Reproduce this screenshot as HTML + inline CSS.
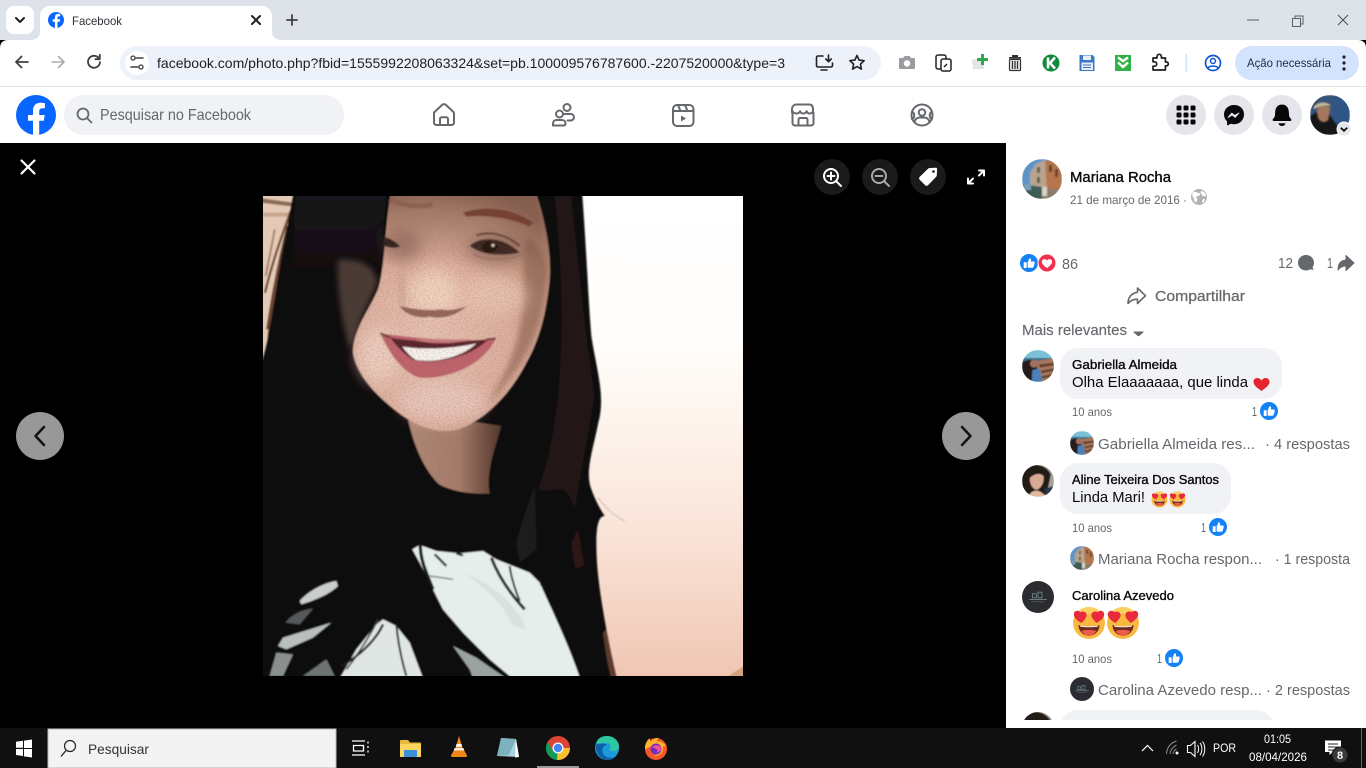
<!DOCTYPE html>
<html lang="pt-BR">
<head>
<meta charset="utf-8">
<title>Facebook</title>
<style>
html,body{margin:0;padding:0;width:1366px;height:768px;overflow:hidden;background:#000}
svg{display:block;font-family:"Liberation Sans",sans-serif}
text{white-space:pre}
.g{fill:#65686c}
.d{fill:#080809}
.sb{stroke-width:.35;stroke:#080809;fill:#080809}
.st{fill:none;stroke:#65686c;stroke-width:2;stroke-linejoin:round;stroke-linecap:round}
.tb{fill:none;stroke:#3c4043;stroke-width:1.8;stroke-linecap:round;stroke-linejoin:round}
</style>
</head>
<body>
<svg width="1366" height="768" viewBox="0 0 1366 768" xmlns="http://www.w3.org/2000/svg">
<defs>
  <linearGradient id="wall" x1="0" y1="0" x2="0" y2="1">
    <stop offset="0" stop-color="#ffffff"/><stop offset=".3" stop-color="#fffdfb"/>
    <stop offset=".5" stop-color="#fdf2ea"/><stop offset=".72" stop-color="#f9e2d6"/>
    <stop offset="1" stop-color="#f0c6b3"/>
  </linearGradient>
  <radialGradient id="skin" gradientUnits="userSpaceOnUse" cx="490" cy="440" r="500">
    <stop offset="0" stop-color="#e9c4b4"/><stop offset=".5" stop-color="#deb09f"/>
    <stop offset=".8" stop-color="#c2967f"/><stop offset="1" stop-color="#8f6656"/>
  </radialGradient>
  <linearGradient id="fore" x1="0" y1="0" x2="0" y2="1">
    <stop offset="0" stop-color="#7a5546" stop-opacity=".6"/><stop offset="1" stop-color="#7a5546" stop-opacity="0"/>
  </linearGradient>
  <linearGradient id="neck" x1="0" y1="0" x2="1" y2="0">
    <stop offset="0" stop-color="#b08a78"/><stop offset=".55" stop-color="#a67c6a"/><stop offset="1" stop-color="#4e3329"/>
  </linearGradient>
  <linearGradient id="hairtop" x1="0" y1="0" x2="0" y2="1">
    <stop offset="0" stop-color="#24242e" stop-opacity=".5"/><stop offset="1" stop-color="#24242e" stop-opacity="0"/>
  </linearGradient>
  <filter id="b5" x="-10%" y="-10%" width="120%" height="120%"><feGaussianBlur stdDeviation="2.500"/></filter>
  <filter id="b16" x="-50%" y="-50%" width="200%" height="200%"><feGaussianBlur stdDeviation="22"/></filter>
  <filter id="b8" x="-50%" y="-50%" width="200%" height="200%"><feGaussianBlur stdDeviation="9"/></filter>
  <filter id="grain" x="0" y="0" width="100%" height="100%">
    <feTurbulence type="fractalNoise" baseFrequency=".22" numOctaves="2" seed="4"/>
    <feColorMatrix values="0 0 0 0 .25  0 0 0 0 .12  0 0 0 0 .1  0 0 0 2.400 -1"/>
  </filter>
  <filter id="bs" x="-10%" y="-10%" width="120%" height="120%"><feGaussianBlur stdDeviation=".7"/></filter>
  <clipPath id="ph"><rect width="1440" height="1440"/></clipPath>
  <clipPath id="faceclip"><path d="M385-20H815C850 80 865 170 860 250C850 350 830 430 790 500C750 580 680 660 600 695C540 720 470 695 420 660C350 610 280 540 270 470C270 400 320 340 345 280C365 220 365 100 385-20z M435 670L650 680 715 690C695 760 668 830 680 892C620 897 560 882 530 866C490 830 455 760 435 670z"/></clipPath>
  <clipPath id="c40"><circle cx="20" cy="20" r="20"/></clipPath>
  <clipPath id="panel"><rect x="1006" y="143" width="360" height="577"/></clipPath>

  <symbol id="like" viewBox="0 0 20 20">
    <circle cx="10" cy="10" r="10" fill="#1482f5"/>
    <path d="M4.6 9.2h2.3c.3 0 .5.2.5.5v5.3c0 .3-.2.5-.5.5H4.6c-.3 0-.5-.2-.5-.5V9.700c0-.3.2-.5.5-.5zM8.500 9.300l2-4.600c1.300 0 2 .9 1.800 2l-.3 1.700h3.200c.9 0 1.400.8 1.200 1.500l-1.200 4.300c-.2.7-.7 1.100-1.300 1.100H9.700c-.7 0-1.200-.5-1.200-1.200z" fill="#fff"/>
  </symbol>
  <symbol id="heart" viewBox="0 0 20 20">
    <circle cx="10" cy="10" r="10" fill="#f0304e"/>
    <path d="M10 16c-4-2.800-6-5-6-7.400C4 6.700 5.400 5.400 7 5.400c1.300 0 2.400.7 3 1.800.6-1.100 1.700-1.800 3-1.800 1.600 0 3 1.300 3 3.200 0 2.400-2 4.600-6 7.400z" fill="#fff"/>
  </symbol>
  <symbol id="eyes" viewBox="0 0 32 32">
    <circle cx="16" cy="16" r="15" fill="#f9b93f"/>
    <path d="M1.800 11C4 4.500 9.500 1 16 1s12 3.500 14.200 10C26 6 6 6 1.800 11z" fill="#fbd063"/>
    <path d="M6 18c6.500 1.500 13.500 1.500 20 0-.5 6.500-5 10-10 10S6.500 24.500 6 18z" fill="#6e2b1e"/>
    <path d="M9 23.500c4-1.400 10-1.400 14 0-2 3-4.500 4.500-7 4.500s-5-1.500-7-4.500z" fill="#ee5a4a"/>
    <path d="M7.500 18.400c5.500 1 11.500 1 17 0l-.3 1c-5 .8-11.400.8-16.400 0z" fill="#fff"/>
    <path d="M8.700 16C5 13.600 1.400 11 1.700 7.400 2 4.500 5.500 3.300 7.800 5.800c2.800-1.500 6.200-.2 5.900 3.100-.2 2.500-2.600 4.800-5 7.100zM23.300 16c3.700-2.400 7.300-5 7-8.600C30 4.500 26.500 3.300 24.200 5.800c-2.800-1.500-6.200-.2-5.900 3.100.2 2.500 2.600 4.800 5 7.100z" fill="#e9293c"/>
  </symbol>
  <symbol id="avM" viewBox="0 0 40 40">
    <g clip-path="url(#c40)"><g filter="url(#bs)">
      <rect width="40" height="40" fill="#5f94c9"/>
      <path d="M22 2L40 0V30L24 36z" fill="#b5744e"/>
      <path d="M8 14l6-9 9-4 2 32L8 30z" fill="#b8a48e"/>
      <rect x="27" y="6" width="3" height="7" fill="#5c4334"/>
      <rect x="33" y="10" width="3" height="8" fill="#6b4732"/>
      <rect x="15" y="8" width="3" height="6" fill="#6a5a4c"/>
      <rect x="15" y="18" width="3" height="6" fill="#6a5a4c"/>
      <path d="M0 25l20 3v12H0z" fill="#3f5b56"/>
      <rect x="2" y="25" width="7" height="6" fill="#7ca0b8"/>
      <path d="M20 30h14v10H20z" fill="#8b7b6a"/>
      <rect x="20" y="28" width="5" height="9" fill="#d8d2c8"/>
    </g></g>
  </symbol>
  <symbol id="avG" viewBox="0 0 40 40">
    <g clip-path="url(#c40)"><g filter="url(#bs)">
      <rect width="40" height="40" fill="#3d6f88"/>
      <rect y="0" width="40" height="10" fill="#7cc0d8"/>
      <path d="M18 14L40 10V40H22z" fill="#a87558"/>
      <path d="M22 18l18-2v3l-18 3zM24 26l16-3v3l-16 3zM24 33l14-3v3l-14 3z" fill="#5f4236"/>
      <path d="M0 16c8-6 16-4 18 2l2 22H0z" fill="#271c1c"/>
      <path d="M13 25l9-2 4 17H12z" fill="#4e7fb8"/>
      <circle cx="15" cy="17" r="5" fill="#a36f5e"/>
    </g></g>
  </symbol>
  <symbol id="avA" viewBox="0 0 40 40">
    <g clip-path="url(#c40)"><g filter="url(#bs)">
      <rect width="40" height="40" fill="#a89f98"/>
      <path d="M0 6C10-4 30-2 36 12L30 40H0z" fill="#241a18"/>
      <path d="M10 16c6-6 14-6 17-2 1 8-3 15-9 17-5-1-9-8-8-15z" fill="#d9ab94"/>
      <path d="M8 40c2-6 6-8 10-8s6 2 14 8z" fill="#e0b8a2"/>
      <path d="M28 30l12-4v14H30z" fill="#27384a"/>
    </g></g>
  </symbol>
  <symbol id="avC" viewBox="0 0 40 40">
    <circle cx="20" cy="20" r="20" fill="#2b2c31"/>
    <path d="M13 21v-5h5v5zM20 21v-7h5v7z" fill="none" stroke="#6f8c8c" stroke-width="1"/>
    <path d="M9 23h22" stroke="#7d9a9a" stroke-width="1"/>
    <path d="M12 26h16" stroke="#555a5e" stroke-width="1"/>
  </symbol>
</defs>

<!-- Browser chrome -->
<rect width="1366" height="40" fill="#dee3ea"/>
<rect x="6" y="6" width="28" height="28" rx="8" fill="#fff" opacity=".95"/>
<path d="M16 18l4 4 4-4" fill="none" stroke="#1f1f1f" stroke-width="2" stroke-linecap="round" stroke-linejoin="round"/>
<path d="M30 40c6 0 10-3 10-9V16c0-5.500 4.500-10 10-10h212c5.500 0 10 4.500 10 10v15c0 6 4 9 10 9z" fill="#fff"/>
<circle cx="56" cy="20" r="8" fill="#0866ff"/>
<path d="M57.500 28v-6.300h2.200l.4-2.500h-2.600v-1.500c0-.8.300-1.300 1.400-1.300h1.300v-2.300s-1-.2-2-.2c-2.100 0-3.300 1.300-3.300 3.500v1.800h-2.200v2.500h2.200V28z" fill="#fff"/>
<text x="72" y="25" font-size="12" fill="#2d3135" textLength="50" lengthAdjust="spacingAndGlyphs">Facebook</text>
<path d="M252 16l8 8M260 16l-8 8" stroke="#1f1f1f" stroke-width="2" stroke-linecap="round"/>
<path d="M292 15v10M287 20h10" stroke="#3c4043" stroke-width="1.800" stroke-linecap="round"/>
<path d="M1247 20h12" stroke="#5a5f66" stroke-width="1"/>
<path d="M1292.500 18.500h8v8h-8zM1295 18.500v-2.500h8v8h-2.500" fill="none" stroke="#5a5f66" stroke-width="1"/>
<path d="M1338 15l10 10M1348 15l-10 10" stroke="#4a4f55" stroke-width="1"/>

<path d="M0 86V48c0-5 3-8 8-8h1350c5 0 8 3 8 8v38z" fill="#fff"/>
<rect y="86" width="1366" height="1" fill="#e1e3e6"/>
<path d="M28 62H16M21.500 56.500L16 62l5.500 5.500" class="tb"/>
<path d="M52 62h12M58.500 56.500L64 62l-5.500 5.500" fill="none" stroke="#a8acb0" stroke-width="1.600" stroke-linecap="round" stroke-linejoin="round"/>
<path d="M99.200 58.800a6 6 0 1 0 .8 3.200M99.800 54.800v4.400h-4.400" class="tb"/>
<rect x="120" y="46" width="761" height="34" rx="17" fill="#edf2fa"/>
<circle cx="137" cy="63" r="12" fill="#fff"/>
<path d="M136 58h7M131 67h7" stroke="#3c4043" stroke-width="1.500" stroke-linecap="round"/>
<circle cx="133" cy="58" r="2" fill="none" stroke="#3c4043" stroke-width="1.300"/>
<circle cx="141" cy="67" r="2" fill="none" stroke="#3c4043" stroke-width="1.300"/>
<text x="157" y="68" font-size="14" fill="#1f1f1f" textLength="628" lengthAdjust="spacingAndGlyphs">facebook.com/photo.php?fbid=1555992208063324&amp;set=pb.100009576787600.-2207520000&amp;type=3</text>
<path d="M823 56h-5a1.500 1.500 0 0 0-1.500 1.500v8a1.500 1.500 0 0 0 1.500 1.500h13a1.500 1.500 0 0 0 1.500-1.500V63M821 70h6M828.500 55v6.500M825.800 59l2.700 2.700 2.700-2.700" fill="none" stroke="#1f1f1f" stroke-width="1.600" stroke-linecap="round" stroke-linejoin="round"/>
<path d="M857 55.500l2.100 4.600 5 .6-3.700 3.400 1 5-4.400-2.500-4.400 2.500 1-5-3.700-3.400 5-.6z" fill="none" stroke="#1f1f1f" stroke-width="1.600" stroke-linejoin="round"/>

<!-- extensions -->
<path d="M900 58h3l1.500-2h5l1.500 2h3c.6 0 1 .4 1 1v9c0 .6-.4 1-1 1h-14c-.6 0-1-.4-1-1v-9c0-.6.4-1 1-1z" fill="#9a9ca0"/>
<circle cx="907" cy="63.500" r="3.200" fill="#fff"/>
<rect x="936" y="55" width="10" height="14" rx="2" fill="#fff" stroke="#222" stroke-width="1.500"/>
<rect x="941" y="59" width="10" height="12" rx="2" fill="#fff" stroke="#222" stroke-width="1.500"/>
<path d="M944 67l3-3" stroke="#222" stroke-width="1.500"/>
<path d="M972 59l12 1v9h-11z" fill="#e4e6e6"/>
<path d="M981 54h3v4h4v3h-4v4h-3v-4h-4v-3h4z" fill="#2ea84a"/>
<path d="M1009 57h12v1.800h-12zM1012 55h6v2h-6z" fill="#333"/>
<rect x="1009.500" y="59.500" width="11" height="11" rx="1" fill="#f0f0f0" stroke="#333" stroke-width="1.200"/>
<path d="M1012.500 61v8M1015 61v8M1017.500 61v8" stroke="#333" stroke-width="1.300"/>
<circle cx="1051" cy="63" r="8.500" fill="#0f8a3c"/>
<path d="M1048 57.500v11M1055 57.500l-5 5.500 5 5.500" fill="none" stroke="#fff" stroke-width="2.600"/>
<path d="M1079.500 55h13l2 2v14h-15z" fill="#3b78c9"/>
<rect x="1083" y="55.500" width="8" height="4.500" fill="#e8eef6"/>
<rect x="1081.500" y="62.500" width="11.500" height="7.500" fill="#e8eef6"/>
<path d="M1083 65h8M1083 67.500h8" stroke="#3b78c9" stroke-width=".9"/>
<rect x="1115" y="55" width="16" height="16" fill="#2fb344"/>
<path d="M1118 57.500l5 3.500 5-3.500M1118 62.500l5 4.500 5-4.500" fill="none" stroke="#fff" stroke-width="2.400"/>
<path d="M1153 58h4v-1.500a2.200 2.200 0 0 1 4.400 0V58h4v4h1.500a2 2 0 0 1 0 3.800H1165.400V70h-12.400v-3.800h1.500a2.200 2.200 0 0 0 0-4.400H1153z" fill="none" stroke="#1f1f1f" stroke-width="1.700" stroke-linejoin="round"/>
<rect x="1185.500" y="54" width="1.500" height="18" fill="#d3e0ed"/>
<circle cx="1213" cy="63" r="7.500" fill="none" stroke="#0b57d0" stroke-width="1.700"/>
<circle cx="1213" cy="61" r="2.500" fill="none" stroke="#0b57d0" stroke-width="1.500"/>
<path d="M1208 68c1-2.500 9-2.500 10 0" fill="none" stroke="#0b57d0" stroke-width="1.500"/>
<rect x="1235" y="46" width="124" height="34" rx="17" fill="#d3e3fd"/>
<text x="1247" y="67" font-size="12" fill="#1f2b40" textLength="84" lengthAdjust="spacingAndGlyphs">Ação necessária</text>
<circle cx="1344" cy="57" r="1.600" fill="#1f1f1f"/><circle cx="1344" cy="63" r="1.600" fill="#1f1f1f"/><circle cx="1344" cy="69" r="1.600" fill="#1f1f1f"/>

<!-- Facebook nav -->
<rect y="87" width="1366" height="56" fill="#fff"/>
<circle cx="36" cy="115" r="20" fill="#0866ff"/>
<path d="M27.800 25.800l.9-5.800h-5.500v-3.700c0-1.600.8-3.100 3.200-3.100h2.500V8.200s-2.300-.4-4.400-.4c-4.500 0-7.500 2.700-7.500 7.700V20h-5v5.800h5v13.900a20 20 0 0 0 6.200 0V25.800z" fill="#fff" transform="translate(16 95)"/>
<rect x="64" y="95" width="280" height="40" rx="20" fill="#f0f2f5"/>
<circle cx="83" cy="114" r="5.500" fill="none" stroke="#65686c" stroke-width="1.800"/>
<path d="M87 118l4.500 4.500" stroke="#65686c" stroke-width="1.800" stroke-linecap="round"/>
<text x="100" y="120" font-size="16" class="g" textLength="151" lengthAdjust="spacingAndGlyphs">Pesquisar no Facebook</text>

<path d="M434 112.500l8-7.500c1.200-1.100 2.800-1.100 4 0l7 6.500c.6.600 1 1.400 1 2.300v8.700c0 1.400-1.100 2.500-2.500 2.500h-15c-1.400 0-2.500-1.100-2.500-2.500v-8.200c0-.9 0-1.600 0-1.800z M440 125v-6c0-1 .8-1.800 1.800-1.800h4.400c1 0 1.800.8 1.800 1.800v6" class="st"/>
<g transform="translate(1.500 0)">
<circle cx="565.500" cy="107.500" r="3.500" class="st"/>
<circle cx="558" cy="114" r="3.500" class="st"/>
<path d="M551.500 125.500v-2c0-2 1.500-3.500 3.500-3.500h5.500c2 0 3.500 1.500 3.500 3.500v.5c0 .8-.7 1.500-1.500 1.500zM563 114h6c2 0 3.500 1.400 3.500 3.200s-1.500 3.300-3.500 3.300h-3" class="st"/>
</g>
<g transform="translate(3 0)">
<rect x="670" y="105" width="20.500" height="21" rx="4" class="st"/>
<path d="M670 111h20.500M675 105l2.500 6M682 105l2.500 6" class="st"/>
<path d="M678 115.500l5 3-5 3z" fill="#65686c"/>
</g>
<path d="M790 113v-3c0-3 1.800-5 4.500-5h12.800c2.700 0 3.700 2 3.700 5v.7c0 2-1.500 3.300-3.200 3.300-1.500 0-2.800-1-3.200-2.300-.5 1.300-1.800 2.300-3.300 2.300s-2.800-1-3.300-2.300c-.5 1.300-1.800 2.300-3.300 2.300-2 0-3.700-.8-4.700-3zM790.500 113v10.500c0 1.400 1.100 2.500 2.500 2.500h16c1.400 0 2.500-1.100 2.500-2.500V113M796.500 126v-6c0-1 .8-1.500 1.500-1.500h6c.7 0 1.500.5 1.500 1.500v6" class="st" transform="translate(2 -.5)"/>
<circle cx="922" cy="115" r="10.500" class="st"/>
<circle cx="922" cy="112.500" r="3.300" class="st"/>
<path d="M914.500 122c.5-3 3-4.500 5-4.500h5c2 0 4.500 1.500 5 4.500M912 112c3 1 3 6 0 7M932 112c-3 1-3 6 0 7" class="st"/>

<circle cx="1186" cy="115" r="20" fill="#e4e6eb"/>
<g fill="#080809">
  <rect x="1176.500" y="105.500" width="5" height="5" rx="1.200"/><rect x="1183.500" y="105.500" width="5" height="5" rx="1.200"/><rect x="1190.500" y="105.500" width="5" height="5" rx="1.200"/>
  <rect x="1176.500" y="112.500" width="5" height="5" rx="1.200"/><rect x="1183.500" y="112.500" width="5" height="5" rx="1.200"/><rect x="1190.500" y="112.500" width="5" height="5" rx="1.200"/>
  <rect x="1176.500" y="119.500" width="5" height="5" rx="1.200"/><rect x="1183.500" y="119.500" width="5" height="5" rx="1.200"/><rect x="1190.500" y="119.500" width="5" height="5" rx="1.200"/>
</g>
<circle cx="1234" cy="115" r="20" fill="#e4e6eb"/>
<path d="M1234 105c-5.800 0-10 4.100-10 9.400 0 2.800 1.100 5.200 3 6.900v3.300c0 .5.500.8.900.6l3-1.400c1 .3 2 .4 3.100.4 5.800 0 10-4.100 10-9.800S1239.800 105 1234 105z" fill="#080809"/>
<path d="M1228 117.500l3.800-4.500 3 2.400 4.200-2.400-3.800 4.500-3-2.400z" fill="#e4e6eb" stroke="#e4e6eb" stroke-width=".8" stroke-linejoin="round"/>
<circle cx="1282" cy="115" r="20" fill="#e4e6eb"/>
<path d="M1282 104.500c-4 0-6.500 3-6.800 7l-.3 4c-.1 1.500-1 2.500-2 3.500-.7.800-.2 2 .9 2h16.400c1.100 0 1.600-1.200.9-2-1-1-1.900-2-2-3.500l-.3-4c-.3-4-2.800-7-6.800-7zM1278.500 123.300a3.600 3.600 0 0 0 7 0z" fill="#080809"/>
<g transform="translate(1310 95)">
  <g clip-path="url(#c40)"><g filter="url(#bs)">
    <rect width="40" height="40" fill="#34557c"/>
    <rect x="24" width="16" height="40" fill="#2d5585"/>
    <path d="M0 40V22c4-6 12-6 20-2l14 20z" fill="#141216"/>
    <path d="M7 14c3-3 10-4 13-1l-2 12c-4 3-8 2-10-3z" fill="#a5775c"/>
    <path d="M4 12c3-5 13-6 17-1-5-1-12 0-17 3z" fill="#c9b898"/>
    <path d="M0 0h14L8 6 0 14z" fill="#3f4650"/>
  </g></g>
</g>
<circle cx="1344" cy="129" r="7" fill="#e4e6eb" stroke="#fff" stroke-width="1"/>
<path d="M1340.800 127.800l3.200 3 3.200-3" fill="none" stroke="#080809" stroke-width="1.700"/>

<!-- Photo viewer -->
<rect y="143" width="1006" height="585" fill="#000"/>
<path d="M21.500 160.500l13 13M34.500 160.500l-13 13" stroke="#fff" stroke-width="2.200" stroke-linecap="round"/>
<circle cx="832" cy="177" r="18" fill="#1a1a1a"/>
<circle cx="880" cy="177" r="18" fill="#1a1a1a"/>
<circle cx="928" cy="177" r="18" fill="#1a1a1a"/>
<circle cx="831" cy="176" r="7" fill="none" stroke="#fff" stroke-width="2"/>
<path d="M836 181l5 5M827.500 176h7M831 172.500v7" stroke="#fff" stroke-width="2" stroke-linecap="round"/>
<circle cx="879" cy="176" r="7" fill="none" stroke="#a8a8a8" stroke-width="2"/>
<path d="M884 181l5 5M875.500 176h7" stroke="#a8a8a8" stroke-width="2" stroke-linecap="round"/>
<path d="M929.500 168l6.300-.3c.8 0 1.300.5 1.300 1.300l-.3 6.300c0 .7-.3 1.200-.8 1.700l-8 8.200c-.8.800-2 .8-2.800 0l-5.500-5.500c-.8-.8-.8-2 0-2.800l8.200-8c.5-.5 1-.8 1.600-.9z" fill="#fff"/>
<circle cx="933.500" cy="171.500" r="1.300" fill="#1a1a1a"/>
<path d="M979 170.500h5v5M984 170.500l-5 5M973 183.500h-5v-5M968 183.500l5-5" fill="none" stroke="#fff" stroke-width="2" stroke-linecap="round" stroke-linejoin="round"/>
<circle cx="40" cy="436" r="24" fill="#989898"/>
<path d="M44 427l-8.500 9 8.500 9" fill="none" stroke="#111" stroke-width="2.500" stroke-linecap="round" stroke-linejoin="round"/>
<circle cx="966" cy="436" r="24" fill="#989898"/>
<path d="M962 427l8.500 9-8.500 9" fill="none" stroke="#111" stroke-width="2.500" stroke-linecap="round" stroke-linejoin="round"/>

<g transform="translate(263 196) scale(.33334)" clip-path="url(#ph)">
  <rect width="1440" height="1440" fill="url(#wall)"/>
  <path d="M1395 1440l45-28v28z" fill="#d5a382"/>
  <g filter="url(#b5)">
    <!-- top-left wall with strands -->
    <path d="M-40-40h150L60 200 10 570H-40z" fill="#e4cab6"/>
    <path d="M-40 2L90 20v12L-40 16z" fill="#8e6a55"/>
    <path d="M0 50H80V62H0z" fill="#c7a48d"/>
    <path d="M85 40C60 110 30 190 6 290" stroke="#6d4430" stroke-width="7" fill="none"/>
    <path d="M75 90C50 190 30 290 14 400" stroke="#5c3a2a" stroke-width="9" fill="none"/>
    <path d="M50 200C30 300 15 400 10 540" stroke="#6d4430" stroke-width="8" fill="none"/>
    <path d="M35 100C25 160 15 200 8 240" stroke="#a57f68" stroke-width="6" fill="none"/>
    <!-- dark silhouette -->
    <path d="M96-40H955C970 150 975 300 985 420C1000 520 1028 600 1006 680C990 760 965 830 985 880C1000 920 1015 945 1025 960C1008 960 1000 985 1000 1040C1000 1150 1020 1250 1068 1500H-40V560C15 520 30 300 66 130z" fill="#0e090a"/>
    <path d="M1005 905C1030 940 1055 960 1085 975" stroke="#a89488" stroke-width="1.500" fill="none"/>
    <!-- hair colour variations -->
    <path d="M100-40H372L350 240 280 300 80 320z" fill="url(#hairtop)"/>
    <path d="M225 190C260 190 330 190 345 260L300 360 262 460C240 400 220 300 225 190z" fill="#5a4741" opacity=".8" filter="url(#b8)"/>
    <path d="M875 0h50c20 200 40 400 70 600l-60 340c-30-100-60-40-110-60 70-180 90-500 50-880z" fill="#2e1b17" opacity=".6"/>
    <path d="M945 1000c20 120 50 300 110 440h-50C970 1300 940 1150 925 1040z" fill="#3c2119" opacity=".7"/>
    <path d="M760 1040c20-70 40-130 55-170l5 190-50 40z" fill="#4a4344" opacity=".3"/>
    <!-- neck -->
    <path d="M435 670L650 680 715 690C695 760 668 830 680 892C620 897 560 882 530 866C490 830 455 760 435 670z" fill="url(#neck)"/>
    <!-- face -->
    <path d="M385-20H815C850 80 865 170 860 250C850 350 830 430 790 500C750 580 680 660 600 695C540 720 470 695 420 660C350 610 280 540 270 470C270 400 320 340 345 280C365 220 365 100 385-20z" fill="url(#skin)"/>
    <path d="M385-20H815L850 210H360C370 150 375 60 385-20z" fill="url(#fore)"/>
    <path d="M790 120c50 30 70 90 60 140-10 110-40 190-90 260-30 40-50 70-90 110 60-100 110-200 110-330 0-70 0-130 10-180z" fill="#7a5141" opacity=".5" filter="url(#b8)"/>
    <!-- soft modelling -->
    <ellipse cx="345" cy="480" rx="60" ry="80" fill="#f3d6c8" opacity=".75" filter="url(#b16)"/>
    <ellipse cx="515" cy="290" rx="75" ry="65" fill="#f3d5c0" opacity=".95" filter="url(#b16)"/>
    <ellipse cx="690" cy="300" rx="100" ry="60" fill="#eac6b0" opacity=".85" filter="url(#b16)"/>
    <ellipse cx="540" cy="615" rx="130" ry="60" fill="#efd3cb" opacity=".6" filter="url(#b16)"/>
    <ellipse cx="700" cy="160" rx="90" ry="45" fill="#6f4c40" opacity=".45" filter="url(#b16)"/>
    <ellipse cx="420" cy="150" rx="55" ry="50" fill="#6f4c40" opacity=".45" filter="url(#b16)"/>
    <path d="M410 230C420 270 425 300 420 330" stroke="#8e6352" stroke-width="20" fill="none" opacity=".35" filter="url(#b16)"/>
    <!-- brow -->
    <path d="M600 50C660 28 750 35 810 80L800 92C740 65 670 55 610 62z" fill="#74412f"/>
    <path d="M380 10C420 30 470 35 510 25" stroke="#8c6250" stroke-width="14" fill="none"/>
    <!-- eyes -->
    <path d="M620 150C650 120 720 120 770 170C720 180 660 180 620 150z" fill="#3d2720"/>
    <ellipse cx="680" cy="153" rx="24" ry="17" fill="#201211"/>
    <circle cx="690" cy="148" r="5" fill="#d9c2b0"/>
    <path d="M640 118C680 104 730 115 770 150" stroke="#63423a" stroke-width="6" fill="none"/>
    <path d="M630 175C670 195 730 195 780 175" stroke="#a07766" stroke-width="6" fill="none"/>
    <path d="M362 125C375 122 395 135 412 152C395 158 375 155 360 148z" fill="#33221d"/>
    <!-- nose -->
    <path d="M410 330C430 360 470 368 500 362C530 370 580 362 610 330C585 340 560 345 535 340C500 345 450 340 410 330z" fill="#7d4f42" opacity=".8"/>
    <!-- mouth -->
    <path d="M352 412C450 425 590 440 698 428C660 510 550 552 470 545C420 530 380 475 352 412z" fill="#bf646c"/>
    <path d="M382 425C470 440 590 440 675 430C630 480 520 508 450 492C420 472 400 450 382 425z" fill="#58222a"/>
    <path d="M455 432C500 425 560 432 625 430C580 445 500 445 455 432z" fill="#cc7a7c"/>
    <path d="M418 452C480 462 570 458 640 442C600 482 520 502 458 492C440 480 428 466 418 452z" fill="#f8f4f0"/>
    <path d="M352 412L382 425" stroke="#6d3a38" stroke-width="6"/>
    <path d="M670 430L698 428" stroke="#6d3a38" stroke-width="6"/>

    <!-- shirt: main white piece -->
    <path d="M448 1060L470 1047L520 1065L590 1072L660 1065L700 1090L800 1130L830 1160C870 1250 930 1370 968 1500H790L740 1440L680 1390L600 1310L540 1240L510 1180L470 1100z" fill="#e6eeec"/>
    <path d="M600 1130c80 30 160 90 190 170l-40-10c-30-70-90-120-150-160z" fill="#cdd8d6" opacity=".6"/>
    <!-- shirt: lower white piece -->
    <path d="M360 1270L400 1290L440 1340L500 1500H200L280 1360L340 1285z" fill="#dfe6e4"/>
    <path d="M570 1350L640 1385L720 1440L740 1500H650L620 1420z" fill="#9aa2a2"/>
    <!-- left stripes -->
    <path d="M110 1215C130 1190 180 1160 220 1155L225 1170C200 1195 150 1215 115 1225z" fill="#c9cfce"/>
    <path d="M68 1280C85 1255 120 1240 150 1238L110 1285z" fill="#55595a"/>
    <path d="M45 1350L60 1325L205 1280L150 1325L70 1360z" fill="#b9bfbf"/>
    <path d="M20 1440L40 1370L90 1375L60 1440z" fill="#8a9090"/>
    <path d="M120 1440L190 1390L215 1440z" fill="#6e7373"/>
    <!-- wisps -->
    <path d="M472 1040C470 1090 490 1130 510 1180" stroke="#151213" stroke-width="10" fill="none"/>
    <path d="M515 1075L550 1110M580 1072L600 1078" stroke="#2a2a2c" stroke-width="7"/>
    <path d="M500 1140L570 1150" stroke="#8b9594" stroke-width="5"/>
    <path d="M685 1085C700 1125 730 1180 785 1240" stroke="#27282a" stroke-width="9" fill="none"/>
    <path d="M740 1110C745 1150 760 1190 770 1215" stroke="#27282a" stroke-width="6" fill="none"/>
    <path d="M400 1285C405 1340 415 1390 430 1440" stroke="#1d2224" stroke-width="6" fill="none"/>
    <path d="M360 1285C340 1330 290 1380 235 1410" stroke="#1d1a1c" stroke-width="7" fill="none"/>
    <path d="M345 1270C320 1320 290 1370 250 1420" stroke="#3a3a3c" stroke-width="5" fill="none"/>
    <path d="M860 1190C900 1280 960 1380 1000 1500L1068 1500C1020 1300 990 1180 980 1100L830 1165z" fill="#0e090a"/>
    <path d="M1030 1300c10 50 20 100 35 160h-15c-15-40-25-110-30-150z" fill="#5d3a2d"/>
  </g>
  <!-- skin grain -->
  <g clip-path="url(#faceclip)"><rect width="1000" height="900" filter="url(#grain)" opacity=".3"/></g>
</g>

<!-- Right panel -->
<rect x="1006" y="143" width="360" height="585" fill="#fff"/>
<use href="#avM" x="1022" y="159" width="40" height="40"/>
<text x="1070" y="182" font-size="15" class="sb" textLength="101" lengthAdjust="spacingAndGlyphs">Mariana Rocha</text>
<text x="1070" y="204" font-size="12" class="g" textLength="117" lengthAdjust="spacingAndGlyphs">21 de março de 2016 ·</text>
<circle cx="1199" cy="197" r="8" fill="#b0b3b8"/>
<path d="M1193 192c3-1 4 1 6 1s1 3-1 3-2 2-1 3-1 4-2 3-1-4-2-5-1-3 0-5zM1201 191c2 0 5 2 5 5-2 1-3 0-4-1s-2-3-1-4zM1203 199c1 0 2 0 2 1l-2 3-1-1z" fill="#fff"/>
<use href="#like" x="1020" y="254" width="18" height="18"/>
<circle cx="1047" cy="263" r="9.500" fill="#fff"/>
<use href="#heart" x="1038.500" y="254.500" width="17" height="17"/>
<text x="1062" y="269" font-size="15" class="g" textLength="16" lengthAdjust="spacingAndGlyphs">86</text>
<text x="1278" y="268" font-size="15" class="g" textLength="15" lengthAdjust="spacingAndGlyphs">12</text>
<path d="M1306 255c4.500 0 8 3.400 8 7.700 0 1.900-.6 3.400-1.500 4.600l1.200 2.700-3.200-.8c-1.300.8-2.900 1.200-4.500 1.200-4.500 0-8-3.300-8-7.700s3.500-7.700 8-7.700z" fill="#65686c"/>
<text x="1327" y="268" font-size="15" class="g" textLength="6" lengthAdjust="spacingAndGlyphs">1</text>
<path d="M1346 255.500l8 7.500-8 7.500v-4.500c-3.500 0-6 1-8 4 0-5 2-9.500 8-10z" fill="#65686c" stroke="#65686c" stroke-linejoin="round"/>
<path d="M1137.500 288l8 7.700-8 7.800v-4.300c-4 0-7 1-9.500 4.300 0-6 3.500-10.500 9.500-11.200z" fill="none" stroke="#65686c" stroke-width="1.600" stroke-linejoin="round"/>
<text x="1155" y="301" font-size="15" class="g" stroke="#65686c" stroke-width=".25" textLength="90" lengthAdjust="spacingAndGlyphs">Compartilhar</text>
<text x="1022" y="335" font-size="15" class="g" stroke="#65686c" stroke-width=".15" textLength="105" lengthAdjust="spacingAndGlyphs">Mais relevantes</text>
<path d="M1134 331.500h9c.5 0 .7.600.4.900l-4 3.500c-.5.400-1.300.400-1.800 0l-4-3.500c-.3-.3-.1-.9.400-.9z" fill="#65686c"/>

<g clip-path="url(#panel)">
  <!-- Comment 1 -->
  <use href="#avG" x="1022" y="350" width="32" height="32"/>
  <rect x="1060" y="348" width="222" height="51" rx="18" fill="#f0f2f5"/>
  <text x="1072" y="369" font-size="13" class="sb" stroke-width=".25" textLength="105" lengthAdjust="spacingAndGlyphs">Gabriella Almeida</text>
  <text x="1072" y="387" font-size="15" class="d" textLength="176" lengthAdjust="spacingAndGlyphs">Olha Elaaaaaaa, que linda</text>
  <path d="M1261.500 391c-5-3.500-8-6-8-9.200 0-2.200 1.700-3.800 3.700-3.800 1.800 0 3.400 1 4.300 2.600.9-1.600 2.500-2.600 4.300-2.600 2 0 3.700 1.600 3.700 3.800 0 3.200-3 5.700-8 9.200z" fill="#e2252f"/>
  <text x="1072" y="416" font-size="12" class="g" textLength="40" lengthAdjust="spacingAndGlyphs">10 anos</text>
  <text x="1252" y="416" font-size="13" class="g" textLength="5" lengthAdjust="spacingAndGlyphs">1</text>
  <use href="#like" x="1260" y="402" width="18" height="18"/>
  <use href="#avG" x="1070" y="431" width="24" height="24"/>
  <text x="1098" y="449" font-size="15" class="g" textLength="157" lengthAdjust="spacingAndGlyphs">Gabriella Almeida res...</text>
  <text x="1265" y="449" font-size="15" class="g" textLength="85" lengthAdjust="spacingAndGlyphs">· 4 respostas</text>

  <!-- Comment 2 -->
  <use href="#avA" x="1022" y="465" width="32" height="32"/>
  <rect x="1060" y="463" width="171" height="51" rx="18" fill="#f0f2f5"/>
  <text x="1072" y="484" font-size="13" class="sb" stroke-width=".25" textLength="147" lengthAdjust="spacingAndGlyphs">Aline Teixeira Dos Santos</text>
  <text x="1072" y="502" font-size="15" class="d" textLength="73" lengthAdjust="spacingAndGlyphs">Linda Mari!</text>
  <use href="#eyes" x="1151" y="491" width="17" height="17"/>
  <use href="#eyes" x="1169" y="491" width="17" height="17"/>
  <text x="1072" y="532" font-size="12" class="g" textLength="40" lengthAdjust="spacingAndGlyphs">10 anos</text>
  <text x="1201" y="532" font-size="13" class="g" textLength="5" lengthAdjust="spacingAndGlyphs">1</text>
  <use href="#like" x="1209" y="518" width="18" height="18"/>
  <use href="#avM" x="1070" y="546" width="24" height="24"/>
  <text x="1098" y="564" font-size="15" class="g" textLength="164" lengthAdjust="spacingAndGlyphs">Mariana Rocha respon...</text>
  <text x="1275" y="564" font-size="15" class="g" textLength="75" lengthAdjust="spacingAndGlyphs">· 1 resposta</text>

  <!-- Comment 3 -->
  <use href="#avC" x="1022" y="581" width="32" height="32"/>
  <text x="1072" y="600" font-size="13" class="sb" stroke-width=".25" textLength="102" lengthAdjust="spacingAndGlyphs">Carolina Azevedo</text>
  <use href="#eyes" x="1072" y="606" width="34" height="34"/>
  <use href="#eyes" x="1106" y="606" width="34" height="34"/>
  <text x="1072" y="663" font-size="12" class="g" textLength="40" lengthAdjust="spacingAndGlyphs">10 anos</text>
  <text x="1157" y="663" font-size="13" class="g" textLength="5" lengthAdjust="spacingAndGlyphs">1</text>
  <use href="#like" x="1165" y="649" width="18" height="18"/>
  <use href="#avC" x="1070" y="677" width="24" height="24"/>
  <text x="1098" y="695" font-size="15" class="g" textLength="164" lengthAdjust="spacingAndGlyphs">Carolina Azevedo resp...</text>
  <text x="1266" y="695" font-size="15" class="g" textLength="84" lengthAdjust="spacingAndGlyphs">· 2 respostas</text>

  <!-- Comment 4 (cut off) -->
  <use href="#avA" x="1022" y="712" width="32" height="32"/>
  <rect x="1060" y="710" width="214" height="51" rx="18" fill="#f0f2f5"/>
</g>

<!-- Taskbar -->
<rect y="728" width="1366" height="40" fill="#101010"/>
<path d="M16 741.800l7-1v7h-7zM24 740.600l8-1.100v8.500h-8zM16 749h7v7l-7-1zM24 749h8v8.500l-8-1.100z" fill="#fff"/>
<rect x="48" y="729" width="288" height="39" fill="#f3f3f3" stroke="#b9b9b9" stroke-width="1"/>
<circle cx="70" cy="746" r="5.500" fill="none" stroke="#222" stroke-width="1.200"/>
<path d="M66 750.500l-5 6" stroke="#222" stroke-width="1.300"/>
<text x="88" y="754" font-size="14" fill="#333" textLength="61" lengthAdjust="spacingAndGlyphs">Pesquisar</text>
<path d="M352 741h13M352 755h13M353.500 745.500h10v5.500h-10z" fill="none" stroke="#fff" stroke-width="1.300"/>
<path d="M368 741.500v2M368 746v2M368 750.500v2" stroke="#fff" stroke-width="1.300"/>
<path d="M400 741c0-.6.400-1 1-1h7l2 2.500h10c.6 0 1 .4 1 1V756h-21z" fill="#e8b93a"/>
<rect x="400" y="744" width="21" height="13" fill="#fbd55c"/>
<rect x="404" y="750" width="13" height="7" fill="#3c8fd8"/>
<path d="M459 736l3.500 12h-7z" fill="#f08a1a"/>
<path d="M456.600 744h4.800l.9 2.800h-6.600z" fill="#fff"/>
<path d="M454 750h10l3 5.500c.2.700-.3 1.500-1 1.500h-14c-.7 0-1.200-.8-1-1.500z" fill="#ef8617"/>
<path d="M454.500 748h9l.7 2.500h-10.400z" fill="#f7f1e6"/>
<path d="M501 738l15 1 3 18-22-1z" fill="#a7d4dd"/>
<path d="M501 738l15 1-7 16-12 1z" fill="#7cb2bd"/>
<path d="M516 739l3 18-4 .5z" fill="#fff"/>
<circle cx="558" cy="748" r="12" fill="#db4437"/>
<path d="M558 748L547.600 754A12 12 0 0 0 558 760h1z" fill="#0f9d58"/>
<path d="M558 748h12a12 12 0 0 1-12 12l-1-.1z" fill="#fbc02d"/>
<path d="M547.600 742a12 12 0 0 0 0 12l6 -2z" fill="#0f9d58"/>
<circle cx="558" cy="748" r="5.500" fill="#fff"/>
<circle cx="558" cy="748" r="4.200" fill="#4285f4"/>
<rect x="537" y="766" width="42" height="2" fill="#9a9a9a"/>
<circle cx="607" cy="748" r="12" fill="#1b9bd8"/>
<path d="M596 744c1-6 6-8 11-8 7 0 12 5 12 10.500 0 3.200-2.800 4.500-5.500 4.500-2 0-4-.8-4.600-1.700 3-1.300 2.500-6-2.900-6.400-4-.3-8 1-10 .6z" fill="#2dc8a0"/>
<path d="M596 744c-1 8 4 16 12 16 3 0 5-1 7-3-4.500 1.800-11 .4-12.500-5-1-3.600 1.500-6.500 4.500-7.500-4-1.500-9-1-11 .5z" fill="#0f5ea8"/>
<circle cx="656" cy="749" r="11" fill="#f9572b"/>
<path d="M645 748c0-4 2-8 5-10-.5 2 0 3 1 3.500 2-2 5-4 8-3.500-1.500 1-2.500 2.500-2 3.500 3-.5 7 1 9 5-1-.5-2.500-.5-3-.2 1 5-2 10-10 10 5-1 7-8 0-10-4 0-6 3-8 2.500z" fill="#fdb32d"/>
<circle cx="656" cy="749" r="5.500" fill="#6d2fc3"/>
<path d="M652 747c3-3 8-2 9 1 .5 2.500-2 5-5 4.500 2-1 2-3 0-3.500z" fill="#f24e9a"/>

<path d="M1142 751l5.500-5.500 5.500 5.500" fill="none" stroke="#fff" stroke-width="1.200"/>
<path d="M1166.500 754c.5-7 4-11 10-13M1170 754c.5-4 2.500-7 6.500-9M1173 754c.3-2 1.500-4 3.500-5" fill="none" stroke="#8e8e8e" stroke-width="1"/>
<circle cx="1177" cy="753" r="1.500" fill="#fff"/>
<path d="M1187.500 745.500h3l4.500-4v15l-4.500-4h-3z" fill="none" stroke="#fff" stroke-width="1.100"/>
<path d="M1197.500 745c1.500 2 1.500 6 0 8M1200 743c2.500 3 2.500 9 0 12M1202.500 741.500c3 4 3 11 0 15" fill="none" stroke="#fff" stroke-width="1"/>
<text x="1213" y="752" font-size="12" fill="#fff" textLength="23" lengthAdjust="spacingAndGlyphs">POR</text>
<text x="1264" y="743" font-size="12" fill="#fff" textLength="27" lengthAdjust="spacingAndGlyphs">01:05</text>
<text x="1249" y="761" font-size="12" fill="#fff" textLength="58" lengthAdjust="spacingAndGlyphs">08/04/2026</text>
<path d="M1325 740.500h16v11.500h-8l-3.500 3v-3H1325z" fill="#fff"/>
<path d="M1328 744h10M1328 747h10M1328 750h6" stroke="#222" stroke-width="1"/>
<circle cx="1340" cy="755" r="8" fill="#3a3a3a" stroke="#111" stroke-width="1"/>
<text x="1337" y="759" font-size="11" fill="#fff" font-weight="bold">8</text>
<rect x="1361" y="728" width="1" height="40" fill="#666"/>
</svg>
</body>
</html>
